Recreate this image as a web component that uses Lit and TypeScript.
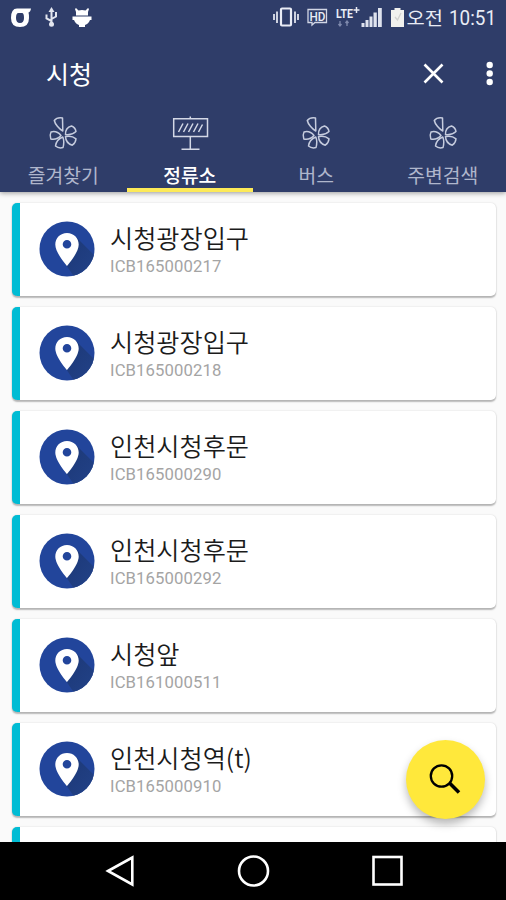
import { LitElement, html, css } from "lit";
import { customElement, property } from "lit/decorators.js";

const stops = [
  ["시청광장입구", "ICB165000217"],
  ["시청광장입구", "ICB165000218"],
  ["인천시청후문", "ICB165000290"],
  ["인천시청후문", "ICB165000292"],
  ["시청앞", "ICB161000511"],
  ["인천시청역(t)", "ICB165000910"],
];

const fanIcon = html`<svg width="40" height="40" viewBox="0 0 40 40" fill="none" stroke="#c6ccde" stroke-width="1.5" stroke-linejoin="round">
  <path d="M19.800 19 L19.500 6 C16.500 5.500 13 6.300 11.300 8.500 C12 12 16 17 19.800 19 Z" />
  <path d="M18 23.500 C15.500 20.500 11.500 19 8 20 C7 22 7 25 7.800 27 C11.500 27.600 15.500 26.500 18 23.500 Z" />
  <path d="M19.800 25 C16 26.500 13 30 12.500 34 C14.500 35.800 17.500 36.200 20 35.600 C21 32 21 28 19.800 25 Z" />
  <path d="M22.500 22.600 C22.300 18.500 24.500 15 28.500 14 C31 15 32.600 17 33 19.500 C30 22.300 26.500 23.200 22.500 22.600 Z" />
  <path d="M22.500 24.600 C26.500 23.600 30 24.300 33 26.800 C32.800 29.500 31.500 31.800 29.300 33.200 C25.500 32 22.700 28.800 22.500 24.600 Z" />
</svg>`;

const boardIcon = html`<svg width="40" height="40" viewBox="0 0 40 40" fill="none" stroke="#d3d8e6" stroke-width="1.5">
  <path d="M20.300 4.500 V6.500 M3.700 6.700 H37.500 V24.500 H3.700 Z M20.300 24.500 V37 M11.500 37.300 H29.500" />
  <path d="M8.500 20 L13 11.500 M13.500 20 L18 11.500 M18.500 20 L23 11.500 M23.500 20 L28 11.500 M28.500 20 L32.500 12.500" />
</svg>`;

@customElement("status-bar")
class StatusBar extends LitElement {
  static styles = css`
    :host { display: block; height: 35px; }
    svg { display: block; }
    text { font-family: Roboto, "Noto Sans CJK KR", sans-serif; fill: #e9ecf5; }
  `;
  render() {
    return html`<svg width="506" height="35" viewBox="0 0 506 35">
      <path d="M17 8.500 H31 Q30.500 12 28.500 12.500 Q29 14 29 18 Q29 27 20 27 Q11 27 11 18 Q11 8.500 17 8.500 Z M18.500 13 Q16 13 16 18 Q16 23 20 23 Q24 23 24 18 Q24 13 22 13 Z" fill="#fff" fill-rule="evenodd" />
      <path d="M51.500 11 V24 M51.500 21 L46.500 18.500 V14.500 M51.500 19 L56 16.500 V12" fill="none" stroke="#e3e6ef" stroke-width="2" />
      <path d="M51.500 7 L54.500 12 H48.500 Z" fill="#e3e6ef" /><circle cx="51.500" cy="24.300" r="2.500" fill="#e3e6ef" />
      <path d="M76 8 L78.500 10.500 Q82 9.500 85.500 10.500 L88 8 L89 9 L88 12 V15.500 H76 V12 L75 9 Z M72.500 16.500 H91.500 V20 H90 Q88.500 24 85 25 V27 H79 V25 Q75.500 24 74 20 H72.500 Z" fill="#fff" />
      <g fill="none" stroke="#e9ecf5" stroke-width="2.200">
        <rect x="281" y="8.500" width="10" height="17" rx="1" />
        <path d="M277 11.500 V23 M274 14 V20 M295 11.500 V23 M298 14 V20" stroke-width="1.700" />
      </g>
      <path d="M308 9.500 H326.500 V22.500 H315 L312 25 V22.500 H308 Z" fill="none" stroke="#d1d6e5" stroke-width="1.300" />
      <text x="309.500" y="20.700" font-size="12.500" font-weight="500" textLength="16" lengthAdjust="spacingAndGlyphs">HD</text>
      <text x="336" y="18" font-size="12" font-weight="700" textLength="17" lengthAdjust="spacingAndGlyphs">LTE</text>
      <path d="M356.500 7 V13 M353.500 10 H359.500" stroke="#e9ecf5" stroke-width="1.500" />
      <path d="M340 21 V26 M338.500 24 L340 26 L341.500 24 M347 26 V21 M345.500 23 L347 21 L348.500 23" fill="none" stroke="#7f8aad" stroke-width="1.300" />
      <path d="M361.500 23 H364.500 V27 H361.500 Z M365.500 20 H368.500 V27 H365.500 Z M369.500 16.500 H372.500 V27 H369.500 Z M373.500 12.500 H376.800 V27 H373.500 Z M378 8 H381.800 V27 H378 Z" fill="#dfe3ee" />
      <path d="M391 10 H394.500 V8 H400.500 V10 H404 V27 H391 Z" fill="#f1f1ee" />
      <path d="M401 13 L397.500 20 L395 17" fill="none" stroke="#d2d2cf" stroke-width="1.300" />
      <text x="406.500" y="24.800" font-size="18.500" textLength="36.500" lengthAdjust="spacingAndGlyphs">오전</text>
      <text x="449" y="25.200" font-size="20" textLength="47" lengthAdjust="spacingAndGlyphs">10:51</text>
    </svg>`;
  }
}

@customElement("stop-card")
class StopCard extends LitElement {
  @property() name = "";
  @property() code = "";
  static styles = css`
    :host {
      display: flex; flex: none; box-sizing: border-box; height: 93px;
      border-left: 8px solid #00bcd4; border-radius: 5px; background: #fff;
      padding: 0 0 1px 18.5px; align-items: center;
      box-shadow: 0 1.5px 1.5px rgba(0,0,0,.26), 0 0 2px rgba(0,0,0,.12);
    }
    .pin { display: block; flex: none; width: 56px; height: 56px; }
    .info { margin-left: 15.5px; white-space: nowrap; }
    .name { font: 350 25.2px/34px "Noto Sans CJK KR", sans-serif; color: #1b1b1b; margin-top: -1px; }
    .code { font: 400 16.7px/22px Roboto, sans-serif; letter-spacing: .1px; color: #a4a4a4; margin-top: 2px; }
  `;
  render() {
    return html`
      <svg class="pin" viewBox="0 0 56 56">
        <defs>
          <linearGradient id="shade" x1=".3" y1=".3" x2=".9" y2=".9"><stop stop-color="#1e3b7c" /><stop offset="1" stop-color="#224288" /></linearGradient>
          <clipPath id="disc"><circle cx="28" cy="28" r="27.500" /></clipPath>
        </defs>
        <circle cx="28" cy="28" r="27.500" fill="#22459b" />
        <path clip-path="url(#disc)" d="M37 16 L60 39 V60 H38 L25 41 Z" fill="url(#shade)" />
        <path fill-rule="evenodd" d="M28 12 C21.300 12 16.300 17 16.300 23.500 C16.300 32 28 45 28 45 C28 45 39.700 32 39.700 23.500 C39.700 17 34.700 12 28 12 Z M28 19 A4.300 4.300 0 1 1 28 27.600 A4.300 4.300 0 1 1 28 19 Z" fill="#fff" />
      </svg>
      <div class="info"><div class="name">${this.name}</div><div class="code">${this.code}</div></div>`;
  }
}

@customElement("app-root")
class AppRoot extends LitElement {
  static styles = css`
    :host {
      display: flex; flex-direction: column; width: 506px; height: 900px; position: relative;
      overflow: hidden; background: #fafafa; font-family: "Noto Sans CJK KR", sans-serif;
    }
    svg { display: block; }
    header { flex: none; height: 191.5px; background: #2f3d69; box-shadow: 0 1px 5px rgba(0,0,0,.4); z-index: 1; }
    .search { height: 77px; display: flex; align-items: center; padding-left: 46px; color: #fff; }
    .query { flex: 1; font-size: 25px; line-height: 36px; margin-top: -2px; }
    .tabs { display: grid; grid-template-columns: repeat(4, 1fr); height: 80px; }
    .tab { display: flex; flex-direction: column; align-items: center; color: #afb6cc; font-size: 19.3px;
      line-height: 26px; font-weight: 400; box-sizing: border-box; white-space: nowrap; }
    .tab.active { color: #fff; font-weight: 500; border-bottom: 4px solid #fdea58; }
    .label { margin-top: 10px; }
    main { flex: 1; min-height: 0; overflow: hidden; display: flex; flex-direction: column; gap: 11px; padding: 11.5px 10px 0 12px; }
    nav { flex: none; height: 58px; background: #000; }
    .fab { position: absolute; left: 405.5px; top: 740px; width: 79px; height: 79px; border-radius: 50%;
      background: #ffe83b; box-shadow: 0 5px 8px rgba(0,0,0,.27); }
  `;
  render() {
    const tabs = ["즐겨찾기", "정류소", "버스", "주변검색"];
    return html`
      <header>
        <status-bar></status-bar>
        <div class="search">
          <div class="query">시청</div>
          <svg width="86" height="40" viewBox="420 54 86 40"><path d="M424.500 64.500 L442.500 82.500 M442.500 64.500 L424.500 82.500" stroke="#fff" stroke-width="2.600" /><g fill="#fff"><circle cx="489.700" cy="65" r="3.200" /><circle cx="489.700" cy="73.500" r="3.200" /><circle cx="489.700" cy="82" r="3.200" /></g></svg>
        </div>
        <div class="tabs">
          ${tabs.map((t, i) => html`<div class="tab ${i === 1 ? "active" : ""}">${i === 1 ? boardIcon : fanIcon}<span class="label">${t}</span></div>`)}
        </div>
      </header>
      <main>${stops.map(([n, c]) => html`<stop-card .name=${n} .code=${c}></stop-card>`)}<stop-card></stop-card></main>
      <nav><svg width="506" height="58" viewBox="0 842 506 58" fill="none" stroke="#fff" stroke-width="2.600">
        <path d="M108 871 L132.300 857.500 V884.500 Z" /><circle cx="253.500" cy="871" r="14.500" /><rect x="373.500" y="857" width="28" height="27.500" />
      </svg></nav>
      <div class="fab"><svg width="79" height="79" viewBox="405.5 740 79 79" fill="none" stroke="#000"><circle cx="441" cy="776" r="10.700" stroke-width="2.300" /><path d="M449 783 L458.500 792.500" stroke-width="3.500" /></svg></div>`;
  }
}
